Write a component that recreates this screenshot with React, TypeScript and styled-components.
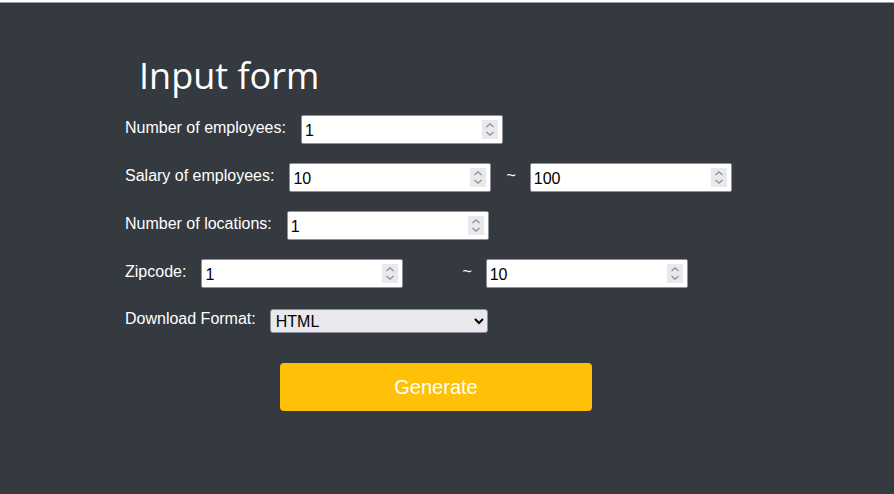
import React from "react";
import styled, { createGlobalStyle } from "styled-components";

const Global = createGlobalStyle`
  html, body { margin: 0; padding: 0; background: #ffffff; }
  body { padding-top: 2px; font-family: "Liberation Sans", Arial, sans-serif; }
`;

const Page = styled.div`
  box-sizing: border-box;
  min-height: 492px;
  background: #343a40;
  border-top: 1px solid #9a9da1;
  padding: 48px 0 0 125px;
  color: #ffffff;
`;

const Title = styled.h1`
  margin: 0 0 14px 14px;
  font-family: "Open Sans", sans-serif;
  font-weight: 400;
  font-size: 36px;
  line-height: 50px;
  color: #ffffff;
`;

const Form = styled.form`
  display: flex;
  flex-direction: column;
  gap: 19px;
`;

const Row = styled.div`
  display: flex;
  align-items: center;
  height: 29px;
`;

const Label = styled.label<{ $gap: number }>`
  font-size: 16px;
  color: #ffffff;
  margin-right: ${(p) => p.$gap}px;
  position: relative;
  top: -2px;
`;

const Field = styled.div`
  position: relative;
  width: 202px;
  height: 29px;
`;

const NumInput = styled.input`
  box-sizing: border-box;
  width: 100%;
  height: 100%;
  padding: 3px 3px 0 3px;
  border: 1px solid #8f8f9d;
  border-radius: 2px;
  background: #ffffff;
  font-family: "Liberation Sans", Arial, sans-serif;
  font-size: 16px;
  color: #000000;
  margin: 0;
  -moz-appearance: textfield;
  &::-webkit-inner-spin-button,
  &::-webkit-outer-spin-button {
    -webkit-appearance: none;
    margin: 0;
  }
`;

const Spinner = styled.span`
  position: absolute;
  right: 5px;
  top: 5px;
  width: 16px;
  height: 19px;
  background: #e9e9ed;
  display: flex;
  align-items: center;
  justify-content: center;
  pointer-events: none;
`;

const Tilde = styled.span<{ $l: number; $r: number }>`
  font-size: 16px;
  color: #ffffff;
  margin: 0 ${(p) => p.$r}px 0 ${(p) => p.$l}px;
  position: relative;
  top: -2px;
`;

const Select = styled.select`
  box-sizing: border-box;
  width: 218px;
  height: 24px;
  padding: 0 1px;
  border: 1px solid #8f8f9d;
  border-radius: 3px;
  background: #e9e9ed;
  font-family: "Liberation Sans", Arial, sans-serif;
  font-size: 16px;
  color: #000000;
  margin: 0;
`;

const SelectRow = styled(Row)`
  height: 24px;
  margin-top: 2px;
`;

const Button = styled.button`
  align-self: flex-start;
  margin: 11px 0 0 155px;
  width: 312px;
  height: 48px;
  border: none;
  border-radius: 4px;
  background: #ffc107;
  color: #ffffff;
  font-family: "Liberation Sans", Arial, sans-serif;
  font-size: 20px;
  cursor: pointer;
`;

function NumberField({ value }: { value: number }) {
  return (
    <Field>
      <NumInput type="number" defaultValue={value} />
      <Spinner>
        <svg width="10" height="15" viewBox="0 0 10 15" fill="none" stroke="#8d8d96" strokeWidth="1.3">
          <path d="M1.5 5 L5 1.8 L8.5 5" />
          <path d="M1.5 10 L5 13.2 L8.5 10" />
        </svg>
      </Spinner>
    </Field>
  );
}

export default function App() {
  return (
    <>
      <Global />
      <Page>
        <Title>Input form</Title>
        <Form onSubmit={(e) => e.preventDefault()}>
          <Row>
            <Label $gap={15}>Number of employees:</Label>
            <NumberField value={1} />
          </Row>
          <Row>
            <Label $gap={15}>Salary of employees:</Label>
            <NumberField value={10} />
            <Tilde $l={15} $r={14}>~</Tilde>
            <NumberField value={100} />
          </Row>
          <Row>
            <Label $gap={15}>Number of locations:</Label>
            <NumberField value={1} />
          </Row>
          <Row>
            <Label $gap={15}>Zipcode:</Label>
            <NumberField value={1} />
            <Tilde $l={59} $r={14}>~</Tilde>
            <NumberField value={10} />
          </Row>
          <SelectRow>
            <Label $gap={14}>Download Format:</Label>
            <Select defaultValue="html">
              <option value="html">HTML</option>
              <option value="csv">CSV</option>
              <option value="json">JSON</option>
            </Select>
          </SelectRow>
          <Button type="submit">Generate</Button>
        </Form>
      </Page>
    </>
  );
}
